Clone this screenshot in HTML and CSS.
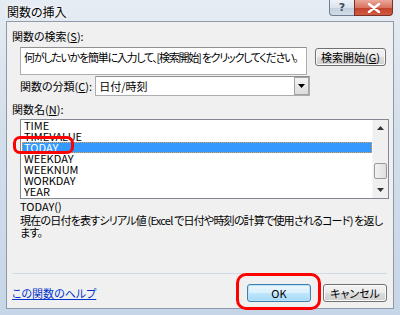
FILE: index.html
```html
<!DOCTYPE html>
<html>
	<head>
		<title>関数の挿入</title>
		<meta charset="utf-8">
		<link rel="stylesheet" href="styles.css">
	</head>
	<body>
		<div class="window">
			<div class="titlebar">
				<span class="title">関数の挿入</span>
				<div class="capButtons">
					<span class="cap help">?</span>
					<span class="cap close">
						<svg width="14" height="10" viewBox="0 0 14 10">
							<path d="M2 1 L12 9 M12 1 L2 9" stroke="#fff" stroke-width="2.4" stroke-linecap="round"/>
						</svg>
					</span>
				</div>
			</div>

			<div class="client">
				<div class="label">関数の検索(<u>S</u>):</div>

				<div class="searchRow">
					<div class="textBox">何がしたいかを簡単に入力して、[検索開始] をクリックしてください。</div>
					<button class="btn searchBtn">検索開始(<u>G</u>)</button>
				</div>

				<div class="categoryRow">
					<span>関数の分類(<u>C</u>):</span>
					<div class="combo">
						<span class="comboText">日付/時刻</span>
						<span class="dropBtn"><svg width="7" height="4" viewBox="0 0 7 4"><path d="M0 0 H7 L3.5 4 Z" fill="#000"/></svg></span>
					</div>
				</div>

				<div class="label nameLabel">関数名(<u>N</u>):</div>

				<div class="listBox">
					<ul class="items">
						<li>TIME</li>
						<li>TIMEVALUE</li>
						<li class="selected">TODAY</li>
						<li>WEEKDAY</li>
						<li>WEEKNUM</li>
						<li>WORKDAY</li>
						<li>YEAR</li>
					</ul>
					<div class="scrollBar">
						<span class="arrow"><svg width="7" height="4" viewBox="0 0 7 4"><path d="M3.5 0 L7 4 H0 Z" fill="#333"/></svg></span>
						<span class="track"><span class="thumb"></span></span>
						<span class="arrow"><svg width="7" height="4" viewBox="0 0 7 4"><path d="M0 0 H7 L3.5 4 Z" fill="#333"/></svg></span>
					</div>
				</div>

				<div class="syntax">TODAY()</div>
				<p class="desc">現在の日付を表すシリアル値 (Excel で日付や時刻の計算で使用されるコード) を返し<br>ます。</p>

				<div class="separator"></div>

				<div class="footer">
					<a class="helpLink" href="#">この関数のヘルプ</a>
					<div class="footerButtons">
						<button class="btn okBtn">OK</button>
						<button class="btn">キャンセル</button>
					</div>
				</div>
			</div>

			<div class="mark markToday"></div>
			<div class="mark markOk"></div>
		</div>
	</body>
</html>
```

FILE: styles.css
```css
body {
	margin: 0;
	width: 400px;
	height: 315px;
	overflow: hidden;
	background-color: #fff;
	font-family: "Noto Sans CJK JP", sans-serif;
	font-size: 11px;
	font-feature-settings: "palt";
}

.window {
	position: relative;
	width: 400px;
	height: 315px;
	box-sizing: border-box;
	padding: 0 6px 6px 6px;
	background: linear-gradient(to bottom, #e6ecf3 0%, #d3dfeb 40%, #c6d6e8 100%);
}

.titlebar {
	height: 21px;
	display: flex;
	justify-content: space-between;
	align-items: flex-start;
}

.title {
	margin: 5px 0 0 1px;
	font-size: 12px;
	line-height: 14px;
	color: #000;
	text-shadow: 0 0 6px #fff, 0 0 3px #fff;
}

.capButtons {
	display: flex;
	margin-right: 1px;
}

.cap {
	height: 16px;
	display: flex;
	align-items: center;
	justify-content: center;
	border: 1px solid #6f7f92;
	border-top: none;
	box-sizing: border-box;
}

.help {
	width: 25px;
	border-radius: 0 0 0 4px;
	border-right: none;
	background: linear-gradient(to bottom, #eef2f7 0%, #dbe3ec 50%, #c3cfdc 51%, #d2dde8 100%);
	color: #3d4c5c;
	font-family: "DejaVu Sans", sans-serif;
	font-size: 11px;
	font-weight: bold;
}

.close {
	width: 39px;
	border-radius: 0 0 4px 0;
	border-color: #7a3228;
	background: linear-gradient(to bottom, #e9a99b 0%, #d87461 50%, #c2402b 51%, #d25a40 100%);
}

.client {
	height: 288px;
	box-sizing: border-box;
	border: 1px solid #8c99a8;
	background-color: #f0f0f0;
	padding: 7px 6px 6px 5px;
	color: #000;
	display: flex;
	flex-direction: column;
}

.label {
	line-height: 14px;
	height: 14px;
}

.searchRow {
	display: flex;
	align-items: flex-start;
	margin: 4px 0 0 8px;
	gap: 8px;
}

.textBox {
	width: 287px;
	height: 28px;
	box-sizing: border-box;
	border: 1px solid #abadb3;
	border-top-color: #8e8f8f;
	background-color: #fff;
	padding: 2px 3px;
	line-height: 14px;
	letter-spacing: -1.25px;
	white-space: nowrap;
	overflow: hidden;
}

.btn {
	font-family: inherit;
	font-size: 11px;
	font-feature-settings: "palt";
	color: #000;
	height: 18px;
	padding: 0;
	line-height: 14px;
	border: 1px solid #707070;
	border-radius: 3px;
	background: linear-gradient(to bottom, #f2f2f2 0%, #ebebeb 50%, #dddddd 51%, #cfcfcf 100%);
	box-shadow: inset 0 0 0 1px #fbfbfb;
}

.searchBtn {
	width: 71px;
	margin-top: 1px;
}

.categoryRow {
	display: flex;
	align-items: center;
	margin: 1px 0 0 8px;
	gap: 3px;
	height: 20px;
}

.combo {
	width: 215px;
	height: 20px;
	box-sizing: border-box;
	border: 1px solid #abadb3;
	border-top-color: #8e8f8f;
	background-color: #fff;
	display: flex;
	justify-content: space-between;
	align-items: center;
}

.comboText {
	padding-left: 3px;
	line-height: 14px;
}

.dropBtn {
	width: 15px;
	height: 18px;
	box-sizing: border-box;
	border: 1px solid #a3a3a3;
	background: linear-gradient(to bottom, #f4f4f4, #dcdcdc);
	display: flex;
	align-items: center;
	justify-content: center;
}

.nameLabel {
	margin-top: 6px;
}

.listBox {
	display: flex;
	margin: 3px 0 0 8px;
	width: 369px;
	height: 80px;
	flex-shrink: 0;
	box-sizing: border-box;
	border: 1px solid #828790;
	background-color: #fff;
}

.items {
	list-style: none;
	margin: 0;
	padding: 0 0 0 1px;
	flex: 1;
}

.items li {
	height: 11px;
	line-height: 11px;
	padding-left: 2px;
	box-sizing: border-box;
}

.items .selected {
	background-color: #3399ff;
	color: #fff;
	outline: 1px dotted #f0a040;
	outline-offset: -1px;
}

.scrollBar {
	width: 15px;
	display: flex;
	flex-direction: column;
	background-color: #f0f0f0;
	border-left: 1px solid #f7f7f7;
}

.arrow {
	height: 16px;
	display: flex;
	align-items: center;
	justify-content: center;
}

.track {
	flex: 1;
	display: flex;
	flex-direction: column;
	justify-content: flex-end;
	padding-bottom: 3px;
}

.thumb {
	height: 14px;
	margin: 0 1px;
	border: 1px solid #9a9a9a;
	border-radius: 2px;
	background: linear-gradient(to right, #f2f2f2, #dedede);
}

.syntax {
	margin: 1px 0 0 8px;
	line-height: 12px;
}

.desc {
	margin: 2px 0 0 8px;
	line-height: 12px;
	letter-spacing: -0.8px;
	white-space: nowrap;
}

.separator {
	margin-top: auto;
	height: 1px;
	background-color: #d2dbe4;
}

.footer {
	display: flex;
	justify-content: space-between;
	align-items: center;
	margin-top: 10px;
}

.helpLink {
	color: #0033cc;
	line-height: 14px;
	text-decoration: underline;
}

.footerButtons {
	display: flex;
	gap: 12px;
}

.footerButtons .btn {
	width: 64px;
}

.okBtn {
	border-color: #3c7fb1;
	box-shadow: inset 0 0 0 1px #bde4f6;
	background: linear-gradient(to bottom, #eaf6fd 0%, #d9f0fc 50%, #bee6fd 51%, #a7d9f5 100%);
}

.mark {
	position: absolute;
	border: 3px solid #ff0000;
	box-sizing: border-box;
}

.markToday {
	left: 13px;
	top: 136px;
	width: 61px;
	height: 18px;
	border-radius: 7px;
}

.markOk {
	left: 236px;
	top: 273px;
	width: 85px;
	height: 37px;
	border-radius: 10px;
}
```
